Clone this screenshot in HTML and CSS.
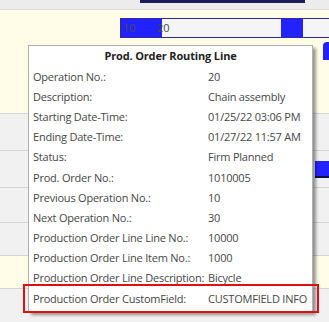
FILE: index.html
```html
<!DOCTYPE html>
<html lang="en">
<head>
    <meta charset="UTF-8">
    <title>Prod. Order Routing Line</title>
    <link rel="stylesheet" href="styles.css">
</head>
<body>
    <div class="gantt">
        <!-- Zeitleiste -->
        <div class="timeline">
            <div class="timeline-bar"></div>
        </div>

        <div class="lane lane-yellow lane-top">
            <div class="bar">
                <div class="seg seg-done"></div>
                <div class="seg seg-open"></div>
                <div class="seg seg-done seg-short"></div>
                <div class="seg seg-open seg-rest"></div>
                <span class="bar-label label-a">10</span>
                <span class="bar-label label-b">20</span>
            </div>
            <div class="edge-bar"></div>
        </div>
        <div class="lane lane-a"></div>
        <div class="lane lane-b">
            <div class="side-bar"></div>
        </div>
        <div class="lane lane-c"></div>
        <div class="lane lane-d"></div>
        <div class="lane lane-yellow lane-e"></div>
        <div class="lane lane-f"></div>
    </div>

    <!-- Tooltip -->
    <div class="tooltip">
        <div class="tooltip-title">Prod. Order Routing Line</div>
        <div class="tooltip-grid">
            <span>Operation No.:</span><span>20</span>
            <span>Description:</span><span>Chain assembly</span>
            <span>Starting Date-Time:</span><span>01/25/22 03:06 PM</span>
            <span>Ending Date-Time:</span><span>01/27/22 11:57 AM</span>
            <span>Status:</span><span>Firm Planned</span>
            <span>Prod. Order No.:</span><span>1010005</span>
            <span>Previous Operation No.:</span><span>10</span>
            <span>Next Operation No.:</span><span>30</span>
            <span>Production Order Line Line No.:</span><span>10000</span>
            <span>Production Order Line Item No.:</span><span>1000</span>
            <span>Production Order Line Description:</span><span>Bicycle</span>
            <span>Production Order CustomField:</span><span>CUSTOMFIELD INFO</span>
        </div>
    </div>
    <div class="highlight"></div>
</body>
</html>
```

FILE: styles.css
```css
:root {
    --grid-bg: #f1f1f1;
    --yellow: #fffde7;
    --line: #d4d4d4;
    --blue: #2222ff;
    --navy: #2b2b9c;
    --text: #474747;
}

body {
    margin: 0;
    width: 329px;
    height: 322px;
    overflow: hidden;
    position: relative;
    font-family: 'Open Sans', 'Noto Sans', sans-serif;
    background: var(--grid-bg);
}

/* Gantt-Hintergrund */
.timeline {
    height: 9px;
    background: #ececec;
    border-bottom: 1px solid #dcdcdc;
}

.timeline-bar {
    margin-left: 140px;
    width: 165px;
    height: 3px;
    background: #1c1c5a;
}

.lane {
    position: relative;
    border-bottom: 1px solid var(--line);
    box-sizing: border-box;
}

.lane-yellow {
    background: var(--yellow);
}

.lane-top { height: 104px; padding-top: 8px; }
.lane-a { height: 37px; }
.lane-b { height: 37px; }
.lane-c { height: 35px; }
.lane-d { height: 33px; }
.lane-e { height: 33px; }
.lane-f { height: 34px; border-bottom: none; }

.bar {
    position: relative;
    display: flex;
    margin-left: 120px;
    height: 20px;
    border: 1px solid var(--navy);
    border-right: none;
    box-sizing: border-box;
}

.seg-done {
    width: 41px;
    background: var(--blue);
}

.seg-short {
    width: 22px;
}

.seg-open {
    width: 119px;
    background: #f5f5f5;
}

.seg-rest {
    flex: 1;
}

.bar-label {
    position: absolute;
    top: 1px;
    font-size: 11px;
    line-height: 16px;
    color: #4a4a4a;
}

.label-a { left: 2px; }
.label-b { left: 36px; }

.edge-bar {
    position: absolute;
    right: 0;
    top: 32px;
    width: 6px;
    height: 18px;
    background: var(--blue);
    border-top-left-radius: 4px;
}

.side-bar {
    position: absolute;
    right: 0;
    top: 10px;
    width: 14px;
    height: 15px;
    background: var(--blue);
    border-bottom: 2px solid #101040;
}

/* Tooltip */
.tooltip {
    position: absolute;
    left: 28px;
    top: 45px;
    width: 285px;
    box-sizing: border-box;
    padding: 0 4px 3px 4px;
    background: #fff;
    border: 1px solid #b0b0b0;
    box-shadow: 3px 3px 3px rgba(0, 0, 0, 0.4);
    color: var(--text);
    font-size: 11px;
    letter-spacing: -0.22px;
}

.tooltip-title {
    text-align: center;
    font-weight: 700;
    color: #222;
    line-height: 20px;
    letter-spacing: -0.15px;
}

.tooltip-grid {
    display: grid;
    grid-template-columns: 175px auto;
    grid-auto-rows: 20.2px;
    align-items: center;
    white-space: nowrap;
}

.highlight {
    position: absolute;
    left: 23px;
    top: 284px;
    width: 296px;
    height: 29px;
    box-sizing: border-box;
    border: 2px solid #e01010;
}
```
